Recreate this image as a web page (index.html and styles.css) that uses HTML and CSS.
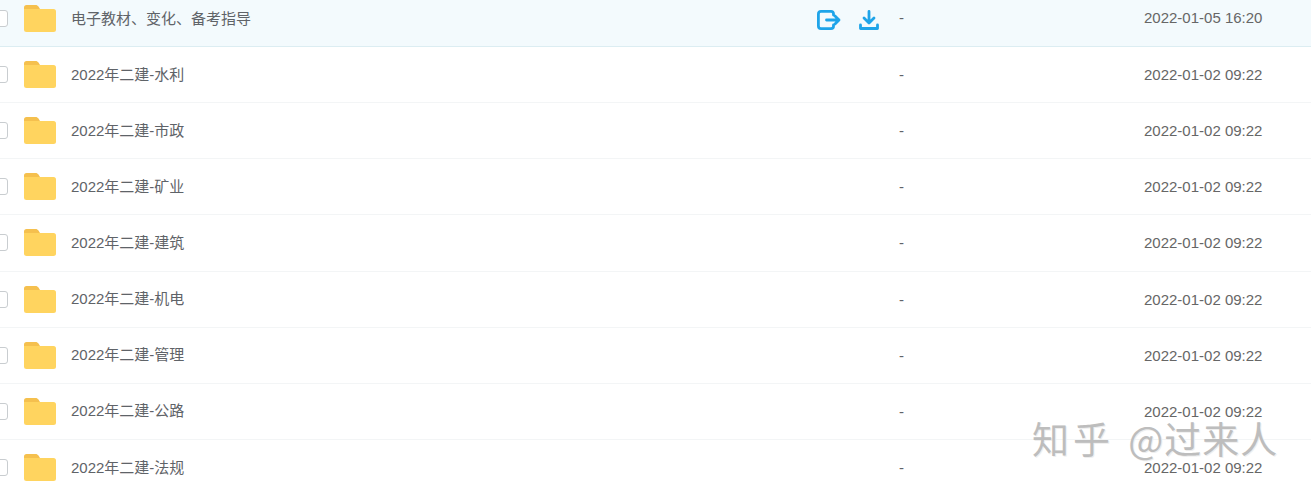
FILE: index.html
```html
<!DOCTYPE html>
<html lang="zh-CN">
  <head>
    <meta charset="UTF-8" />
    <title>文件列表</title>
    <link rel="stylesheet" href="styles.css">
  </head>
  <body>
    <svg class="defs" width="0" height="0">
      <symbol id="folder" viewBox="0 0 32 27">
        <path d="M0 2.500A2.500 2.500 0 0 1 2.500 0h9c1.400 0 2.300.6 3 1.600L16 4H0z" fill="#f5c04e" />
        <path d="M0 4h29.500A2.500 2.500 0 0 1 32 6.500V24.500A2.500 2.500 0 0 1 29.500 27H2.500A2.500 2.500 0 0 1 0 24.500z" fill="#ffd45f" />
      </symbol>
    </svg>

    <div class="file-list">
      <!-- 选中行 -->
      <div class="row row-active">
        <span class="check"></span>
        <svg class="folder"><use href="#folder" /></svg>
        <span class="name">电子教材、变化、备考指导</span>
        <div class="actions">
          <svg class="icon" width="24" height="20" viewBox="0 0 24 20" fill="none" stroke="#1ea4e9" stroke-width="2.800" stroke-linecap="round" stroke-linejoin="round">
            <path d="M16.500 5V3.800Q16.500 1.400 14 1.400H4Q1.400 1.400 1.400 4V16Q1.400 18.600 4 18.600H14Q16.500 18.600 16.500 16.200V15" />
            <path d="M9.500 10H22M18 6L22 10L18 14" />
          </svg>
          <svg class="icon" width="20" height="20" viewBox="0 0 20 20" fill="none" stroke="#1ea4e9" stroke-width="2.800" stroke-linecap="round" stroke-linejoin="round">
            <path d="M10 1.400V12.500M5 8L10 13L15 8" />
            <path d="M1.500 15V18.500H18.500V15" />
          </svg>
        </div>
        <span class="size">-</span>
        <span class="date">2022-01-05 16:20</span>
      </div>

      <div class="row">
        <span class="check"></span>
        <svg class="folder"><use href="#folder" /></svg>
        <span class="name">2022年二建-水利</span>
        <div class="actions"></div>
        <span class="size">-</span>
        <span class="date">2022-01-02 09:22</span>
      </div>
      <div class="row">
        <span class="check"></span>
        <svg class="folder"><use href="#folder" /></svg>
        <span class="name">2022年二建-市政</span>
        <div class="actions"></div>
        <span class="size">-</span>
        <span class="date">2022-01-02 09:22</span>
      </div>
      <div class="row">
        <span class="check"></span>
        <svg class="folder"><use href="#folder" /></svg>
        <span class="name">2022年二建-矿业</span>
        <div class="actions"></div>
        <span class="size">-</span>
        <span class="date">2022-01-02 09:22</span>
      </div>
      <div class="row">
        <span class="check"></span>
        <svg class="folder"><use href="#folder" /></svg>
        <span class="name">2022年二建-建筑</span>
        <div class="actions"></div>
        <span class="size">-</span>
        <span class="date">2022-01-02 09:22</span>
      </div>
      <div class="row">
        <span class="check"></span>
        <svg class="folder"><use href="#folder" /></svg>
        <span class="name">2022年二建-机电</span>
        <div class="actions"></div>
        <span class="size">-</span>
        <span class="date">2022-01-02 09:22</span>
      </div>
      <div class="row">
        <span class="check"></span>
        <svg class="folder"><use href="#folder" /></svg>
        <span class="name">2022年二建-管理</span>
        <div class="actions"></div>
        <span class="size">-</span>
        <span class="date">2022-01-02 09:22</span>
      </div>
      <div class="row">
        <span class="check"></span>
        <svg class="folder"><use href="#folder" /></svg>
        <span class="name">2022年二建-公路</span>
        <div class="actions"></div>
        <span class="size">-</span>
        <span class="date">2022-01-02 09:22</span>
      </div>
      <div class="row">
        <span class="check"></span>
        <svg class="folder"><use href="#folder" /></svg>
        <span class="name">2022年二建-法规</span>
        <div class="actions"></div>
        <span class="size">-</span>
        <span class="date">2022-01-02 09:22</span>
      </div>
    </div>

    <!-- 水印 -->
    <div class="watermark"><span class="watermark-brand">知乎</span> @过来人</div>
  </body>
</html>
```

FILE: styles.css
```css
* {
  margin: 0;
  padding: 0;
  box-sizing: border-box;
}

html,
body {
  height: 100%;
  overflow: hidden;
}

body {
  background-color: #fff;
  font-family: "Liberation Sans", "Noto Sans CJK SC", sans-serif;
  font-size: 15px;
  color: #5f6368;
}

.defs {
  display: block;
  height: 0;
}

.file-list {
  display: flex;
  flex-direction: column;
}

/* 复选框、图标、名称、操作、大小、日期 */
.row {
  display: grid;
  grid-template-columns: 8px 32px 777px 82px 245px auto;
  align-items: center;
  flex: none;
  height: 56.15px;
  border-bottom: 1px solid #f3f5f6;
}

.row-active {
  height: 47px;
  padding-bottom: 9px;
  background-color: #f3fafd;
  border-bottom-color: #dcedf2;
}

.check {
  width: 14px;
  height: 17px;
  margin-left: -6px;
  border: 1px solid #c9cdd0;
  border-radius: 3px;
  background-color: #fff;
}

.folder {
  width: 32px;
  height: 27px;
  margin-left: 16px;
}

.name {
  margin-left: 31px;
  margin-bottom: 3px;
  white-space: nowrap;
}

.actions {
  display: flex;
  align-items: center;
  gap: 18px;
  margin-top: 3px;
}

.row-active .size,
.row-active .date {
  margin-bottom: 2px;
}

.date {
  color: #666;
}

.watermark {
  position: absolute;
  left: 1032px;
  top: 415px;
  font-family: "Noto Sans CJK SC", sans-serif;
  font-size: 37px;
  line-height: 46px;
  letter-spacing: 1px;
  word-spacing: 5px;
  white-space: nowrap;
  color: #bdbdbd;
  text-shadow: 1px 1px 0 #eee;
}

.watermark-brand {
  letter-spacing: 4px;
}
```
